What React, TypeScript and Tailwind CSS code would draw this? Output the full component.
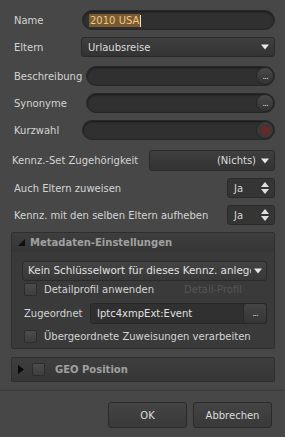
import React from "react";

const font = { fontFamily: '"DejaVu Sans", "Liberation Sans", sans-serif' };

function Dots() {
  return <span className="text-[9px] leading-none text-[#d8d8d8] tracking-[-1px]">...</span>;
}

function PillInput({ children, button }: { children?: React.ReactNode; button?: "dots" | "red" }) {
  return (
    <div className="flex-1 h-[20px] rounded-full bg-[#303030] border border-[#272727] shadow-[inset_0_1px_2px_rgba(0,0,0,0.5)] flex items-center relative">
      <div className="flex-1 pl-[6px]">{children}</div>
      {button === "dots" && (
        <div className="w-[18px] h-[18px] rounded-full bg-gradient-to-b from-[#4a4a4a] to-[#333] border border-[#262626] flex items-center justify-center">
          <Dots />
        </div>
      )}
      {button === "red" && (
        <div className="w-[18px] h-[18px] rounded-full bg-[#3a3a3a] border border-[#262626] flex items-center justify-center">
          <div className="w-[9px] h-[9px] rounded-full bg-[#642a2a] shadow-[0_0_2px_#702020]" />
        </div>
      )}
    </div>
  );
}

function Arrow() {
  return (
    <svg width="8" height="6" viewBox="0 0 8 6">
      <path d="M0 0.5 L8 0.5 L4 5.5 Z" fill="#e8e8e8" />
    </svg>
  );
}

function Spinner() {
  return (
    <svg width="8" height="12" viewBox="0 0 8 12">
      <path d="M4 0 L8 5 L0 5 Z" fill="#e0e0e0" />
      <path d="M0 7 L8 7 L4 12 Z" fill="#e0e0e0" />
    </svg>
  );
}

function Checkbox() {
  return <div className="w-[13px] h-[13px] rounded-[2px] bg-gradient-to-b from-[#4c4c4c] to-[#3e3e3e] border border-[#2c2c2c]" />;
}

export default function App() {
  return (
    <div className="w-[285px] h-[437px] bg-[#474747] text-[#d4d4d4] text-[10px] flex flex-col relative overflow-hidden" style={font}>
      <div className="flex flex-col pl-[12px] pr-[10px] pt-[10px]">
        <div className="flex items-center h-[20px]">
          <div className="w-[70px] pl-[2px]">Name</div>
          <PillInput>
            <span className="bg-[#7a5a30] text-[#efc88a] px-[1px] py-[1px]">2010 USA</span>
            <span className="inline-block w-[1px] h-[12px] bg-[#e0e0e0] align-middle" />
          </PillInput>
        </div>
        <div className="flex items-center h-[20px] mt-[7px]">
          <div className="w-[69px] pl-[2px]">Eltern</div>
          <div className="flex-1 h-[20px] rounded-[3px] bg-gradient-to-b from-[#3f3f3f] to-[#333] border border-[#2a2a2a] flex items-center pl-[6px] pr-[5px]">
            <span className="flex-1 text-[#dcdcdc]">Urlaubsreise</span>
            <Arrow />
          </div>
        </div>
        <div className="flex items-center h-[20px] mt-[9px]">
          <div className="w-[74px] pl-[2px]">Beschreibung</div>
          <PillInput button="dots" />
        </div>
        <div className="flex items-center h-[20px] mt-[7px]">
          <div className="w-[74px] pl-[2px]">Synonyme</div>
          <PillInput button="dots" />
        </div>
        <div className="flex items-center h-[20px] mt-[7px]">
          <div className="w-[70px] pl-[2px]">Kurzwahl</div>
          <PillInput button="red" />
        </div>
        <div className="flex items-center h-[21px] mt-[10px]">
          <div className="flex-1">Kennz.-Set Zugehörigkeit</div>
          <div className="w-[126px] h-[21px] rounded-[3px] bg-gradient-to-b from-[#3f3f3f] to-[#333] border border-[#2a2a2a] flex items-center justify-end pr-[5px] gap-[5px]">
            <span className="text-[#dcdcdc]">(Nichts)</span>
            <Arrow />
          </div>
        </div>
        <div className="flex items-center h-[20px] mt-[7px]">
          <div className="flex-1 pl-[2px]">Auch Eltern zuweisen</div>
          <div className="w-[48px] h-[20px] rounded-[3px] bg-[#353535] border border-[#2a2a2a] flex items-center pl-[6px] pr-[5px]">
            <span className="flex-1">Ja</span>
            <Spinner />
          </div>
        </div>
        <div className="flex items-center h-[20px] mt-[7px]">
          <div className="flex-1 pl-[2px]">Kennz. mit den selben Eltern aufheben</div>
          <div className="w-[48px] h-[20px] rounded-[3px] bg-[#353535] border border-[#2a2a2a] flex items-center pl-[6px] pr-[5px]">
            <span className="flex-1">Ja</span>
            <Spinner />
          </div>
        </div>

        <div className="mt-[7px] -ml-[1px] bg-[#3a3a3a] border border-[#2e2e2e] rounded-[2px] flex flex-col">
          <div className="h-[19px] flex items-center pl-[6px] bg-gradient-to-b from-[#3e3e3e] to-[#363636]">
            <svg width="7" height="7" viewBox="0 0 7 7"><path d="M7 0 L7 7 L0 7 Z" fill="#0e0e0e" /></svg>
            <span className="ml-[5px] font-bold text-[#a0a0a0]">Metadaten-Einstellungen</span>
          </div>
          <div className="flex flex-col px-[10px] pt-[9px] pb-[4px]">
            <div className="h-[20px] -mr-[3px] rounded-[3px] bg-gradient-to-b from-[#434343] to-[#383838] border border-[#2a2a2a] flex items-center pl-[5px] pr-[4px]">
              <span className="w-[223px] whitespace-nowrap overflow-hidden text-[#e0e0e0] text-[10.4px]">Kein Schlüsselwort für dieses Kennz. anlegen</span>
              <span className="flex-1" />
              <Arrow />
            </div>
            <div className="flex items-center h-[15px] mt-[1px] pl-[2px]">
              <Checkbox />
              <span className="ml-[7px]">Detailprofil anwenden</span>
              <span className="ml-[30px] text-[#555]">Detail-Profil</span>
            </div>
            <div className="flex items-center h-[21px] mt-[6px] pl-[2px]">
              <span className="w-[66px]">Zugeordnet</span>
              <div className="flex-1 -mr-[3px] h-[21px] rounded-[3px] bg-[#303030] border border-[#272727] flex items-center">
                <span className="flex-1 pl-[6px] text-[#e0e0e0]">Iptc4xmpExt:Event</span>
                <div className="w-[23px] h-[19px] rounded-[3px] bg-gradient-to-b from-[#444] to-[#363636] border-l border-[#282828] flex items-center justify-center"><Dots /></div>
              </div>
            </div>
            <div className="flex items-center h-[15px] mt-[5px] pl-[2px]">
              <Checkbox />
              <span className="ml-[7px]">Übergeordnete Zuweisungen verarbeiten</span>
            </div>
          </div>
        </div>

        <div className="mt-[8px] -ml-[1px] h-[25px] bg-gradient-to-b from-[#3e3e3e] to-[#363636] border border-[#2e2e2e] rounded-[2px] flex items-center pl-[6px]">
          <svg width="6" height="9" viewBox="0 0 6 9"><path d="M0 0 L6 4.5 L0 9 Z" fill="#0a0a0a" /></svg>
          <div className="ml-[8px]"><Checkbox /></div>
          <span className="ml-[10px] font-bold text-[#a0a0a0]">GEO Position</span>
        </div>
      </div>

      <div className="mt-[8px] h-[1px] bg-[#3a3a3a]" />
      <div className="flex justify-end gap-[6px] pr-[13px] pt-[11px]">
        <div className="w-[79px] h-[26px] rounded-[3px] bg-gradient-to-b from-[#444] to-[#393939] border border-[#2a2a2a] flex items-center justify-center text-[#dcdcdc]">OK</div>
        <div className="w-[79px] h-[26px] rounded-[3px] bg-gradient-to-b from-[#444] to-[#393939] border border-[#2a2a2a] flex items-center justify-center text-[#dcdcdc]">Abbrechen</div>
      </div>
    </div>
  );
}
